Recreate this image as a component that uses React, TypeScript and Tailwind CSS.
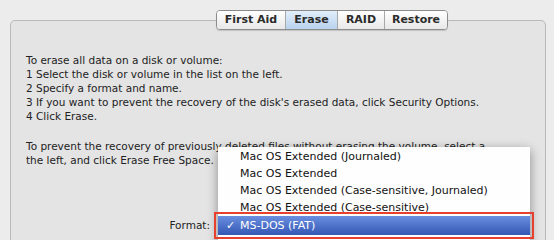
import { useState } from "react";

const tabs = ["First Aid", "Erase", "RAID", "Restore"];

const steps = [
  "To erase all data on a disk or volume:",
  "1 Select the disk or volume in the list on the left.",
  "2 Specify a format and name.",
  "3 If you want to prevent the recovery of the disk's erased data, click Security Options.",
  "4 Click Erase.",
];

const formats = [
  "Mac OS Extended (Journaled)",
  "Mac OS Extended",
  "Mac OS Extended (Case-sensitive, Journaled)",
  "Mac OS Extended (Case-sensitive)",
];

const App = () => {
  const [tab, setTab] = useState("Erase");

  return (
    <div
      className="w-[554px] h-[240px] overflow-hidden bg-[#ececec] pt-[10px] text-[#222]"
      style={{ fontFamily: '"DejaVu Sans", "Noto Sans", sans-serif' }}
    >
      <div className="relative z-10 ml-[216px] flex h-[20px] w-[232px] overflow-hidden rounded-[4px] border border-[#8c8c8c] shadow-[0_1px_1px_rgba(0,0,0,0.15)]">
        {tabs.map((t, i) => (
          <div
            key={t}
            onClick={() => setTab(t)}
            className={
              "flex items-center justify-center text-[11px] font-bold text-[#2b2b2b] " +
              (i > 0 ? "border-l border-[#a8a8a8] " : "") +
              (tab === t
                ? "bg-gradient-to-b from-[#e2eefa] to-[#b9d3ee] "
                : "bg-gradient-to-b from-[#ffffff] to-[#e8e8e8] ") +
              (t === "First Aid"
                ? "w-[68px]"
                : t === "Erase"
                ? "w-[52px]"
                : t === "RAID"
                ? "w-[47px]"
                : "flex-1")
            }
          >
            {t}
          </div>
        ))}
      </div>

      <div className="relative -mt-[10px] ml-[10px] h-[240px] w-[536px] rounded-[5px] border border-[#bababa] bg-[#e4e4e4] pl-[15px] pt-[32px] text-[10.5px] leading-[14px]">
        {steps.map((s) => (
          <div key={s} className="whitespace-nowrap">
            {s}
          </div>
        ))}

        <div className="mt-[16px] whitespace-nowrap">
          To prevent the recovery of previously deleted files without erasing the volume, select a
        </div>
        <div className="whitespace-nowrap">the left, and click Erase Free Space.</div>

        <div className="mt-[51px] w-[184px] text-right">Format:</div>

        {/* popup menu */}
        <div className="absolute left-[207px] top-[126px] h-[120px] w-[312px] bg-white/95 pt-px text-[11px] shadow-[0_3px_10px_rgba(0,0,0,0.4)]">
          {formats.map((f) => (
            <div key={f} className="flex h-[17px] items-center whitespace-nowrap pl-[22px] text-[#111]">
              {f}
            </div>
          ))}
          <div className="relative flex h-[19px] items-center bg-gradient-to-b from-[#6a8ee0] to-[#3458b4] pl-[8px] text-white outline-2 outline-offset-2 outline-[#e8402e]">
            <span className="w-[14px]">✓</span>
            MS-DOS (FAT)
          </div>
        </div>
      </div>
    </div>
  );
};

export default App;
